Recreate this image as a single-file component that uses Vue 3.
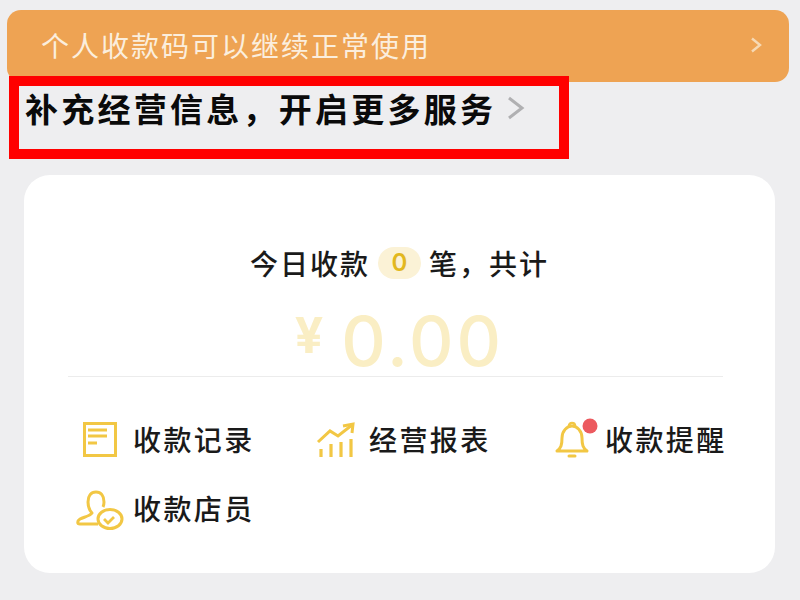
<script setup>
const actions = [
  { label: '收款记录', icon: 'record' },
  { label: '经营报表', icon: 'chart' },
  { label: '收款提醒', icon: 'bell' },
  { label: '收款店员', icon: 'staff' }
]
</script>

<template>
  <div class="page">
    <div class="banner">
      <span class="banner-text">个人收款码可以继续正常使用</span>
      <svg class="banner-arrow" width="13" height="16" viewBox="0 0 13 16"><path d="M2 1.5l8 6.5-8 6.5" fill="none" stroke="#f6d9b4" stroke-width="2.4"/></svg>
    </div>
    <div class="notice">
      <span class="notice-text">补充经营信息，开启更多服务</span>
      <svg class="notice-arrow" width="18" height="26" viewBox="0 0 18 26"><path d="M2 3l13 10L2 23" fill="none" stroke="#b0b0b2" stroke-width="3"/></svg>
    </div>
    <div class="card">
      <div class="today">
        <span>今日收款</span>
        <span class="count">0</span>
        <span>笔，共计</span>
      </div>
      <div class="amount"><span class="yen">¥</span><span class="value">0.00</span></div>
      <div class="rule"></div>
      <div class="actions">
        <div v-for="a in actions" :key="a.label" class="action">
          <svg class="icon" width="57" height="40" viewBox="0 0 57 40" fill="none" stroke="#f2c744">
            <template v-if="a.icon === 'record'">
              <rect x="8.5" y="3.5" width="31" height="32" stroke-width="3"/>
              <path d="M12 10h19M12 16h19M12 23h9" stroke-width="2.8"/>
            </template>
            <template v-else-if="a.icon === 'chart'">
              <path d="M6 22L18 11l8 5L40 5" stroke-width="3"/>
              <path d="M31 6l10-2-1 9" stroke-width="3"/>
              <path d="M9 29v8M19 24v13M29 22v15M39 19v18" stroke-width="3.2"/>
            </template>
            <template v-else-if="a.icon === 'bell'">
              <path d="M9 31c4-3 5-6 5-13 0-7 5-12 10-12s10 5 10 12c0 7 1 10 5 13z" stroke-width="3" stroke-linejoin="round"/>
              <path d="M21 6c0-4 6-4 6 0" stroke-width="2.6"/>
              <path d="M21 36h6" stroke-width="3" stroke-linecap="round"/>
              <circle cx="42" cy="6" r="7.5" fill="#ec5a5f" stroke="none"/>
            </template>
            <template v-else>
              <path d="M22 35H4c-3 0-3-3 0-5 4-2 10-3 12-6-3-3-4-7-4-11 0-6 3-10 8-10s8 4 8 10c0 2 0 3-1 5" stroke-width="3" stroke-linejoin="round"/>
              <ellipse cx="34" cy="30" rx="12" ry="9.5" stroke-width="3"/>
              <path d="M28 30l4 4 6-6" stroke-width="2.8"/>
            </template>
          </svg>
          <span class="action-label">{{ a.label }}</span>
        </div>
      </div>
    </div>
  </div>
</template>

<style scoped>
.page {
  width: 800px;
  height: 600px;
  box-sizing: border-box;
  padding-top: 10px;
  background: #eeeef0;
  overflow: hidden;
  font-family: "Noto Sans CJK SC", "Noto Sans", sans-serif;
}
.banner {
  margin-left: 7px;
  width: 782px;
  height: 72px;
  box-sizing: border-box;
  padding: 0 26px 2px 34px;
  background: #eea353;
  border-radius: 14px;
  display: flex;
  align-items: center;
  justify-content: space-between;
}
.banner-text {
  color: #fbeedd;
  font-size: 28px;
  letter-spacing: 2px;
  line-height: 40px;
}
.banner-arrow { flex: none; }
.notice {
  position: relative;
  margin: -6px 0 0 9px;
  width: 560px;
  height: 83px;
  box-sizing: border-box;
  border: 10px solid #ff0000;
  background: #eeeef0;
  padding: 0 0 20px 6px;
  display: flex;
  align-items: center;
  gap: 11px;
}
.notice-text {
  color: #0a0a0a;
  font-size: 33px;
  font-weight: 700;
  letter-spacing: 3.25px;
  line-height: 44px;
  white-space: nowrap;
}
.card {
  margin: 16px 0 0 24px;
  width: 751px;
  height: 398px;
  box-sizing: border-box;
  background: #fff;
  border-radius: 26px;
  padding-top: 66px;
}
.today {
  display: flex;
  justify-content: center;
  align-items: center;
  gap: 8px;
  height: 44px;
  font-size: 28px;
  font-weight: 500;
  letter-spacing: 2px;
  color: #1a1a1a;
}
.count {
  width: 43px;
  height: 32px;
  border-radius: 16px;
  background: #fbf2d6;
  color: #e2b81f;
  font-size: 24px;
  font-weight: 600;
  letter-spacing: 0;
  text-align: center;
  line-height: 32px;
  font-family: Inter, sans-serif;
}
.amount {
  display: flex;
  justify-content: center;
  align-items: flex-start;
  height: 70px;
  margin-top: 21px;
  color: #faeec4;
  font-family: Inter, sans-serif;
}
.yen {
  font-size: 50px;
  line-height: 50px;
  font-weight: 700;
  margin: 4px 18px 0 0;
}
.value {
  font-size: 69px;
  line-height: 70px;
  font-weight: 500;
  letter-spacing: 3px;
}
.rule {
  height: 1px;
  margin: 0 52px 0 44px;
  background: #ececec;
}
.actions {
  display: grid;
  grid-template-columns: 236px 236px 1fr;
  row-gap: 27px;
  padding: 42px 0 0 52px;
}
.action {
  display: flex;
  align-items: center;
  height: 42px;
}
.icon { flex: none; display: block; overflow: visible; }
.action-label {
  font-size: 28px;
  font-weight: 500;
  letter-spacing: 2.4px;
  line-height: 40px;
  margin-bottom: 2px;
  color: #1a1a1a;
  white-space: nowrap;
}
</style>
